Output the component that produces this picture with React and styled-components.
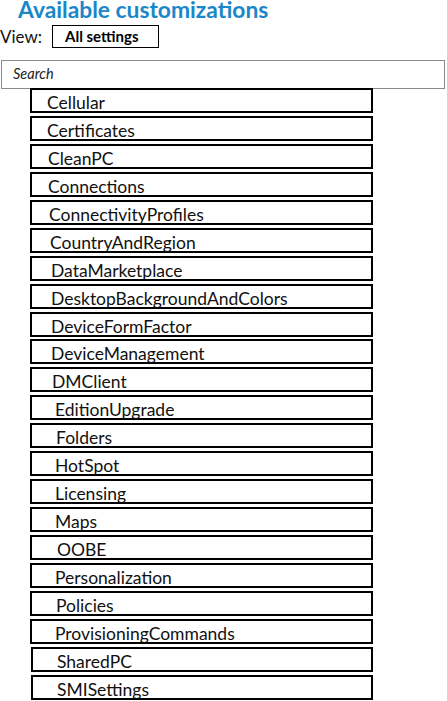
import React from 'react'
import styled, { createGlobalStyle } from 'styled-components'

const items = [
  ['Cellular', 15],
  ['Certificates', 15],
  ['CleanPC', 16],
  ['Connections', 16],
  ['ConnectivityProfiles', 17],
  ['CountryAndRegion', 18],
  ['DataMarketplace', 19],
  ['DesktopBackgroundAndColors', 19],
  ['DeviceFormFactor', 19],
  ['DeviceManagement', 19],
  ['DMClient', 20],
  ['EditionUpgrade', 23],
  ['Folders', 24],
  ['HotSpot', 23],
  ['Licensing', 23],
  ['Maps', 23],
  ['OOBE', 25],
  ['Personalization', 23],
  ['Policies', 24],
  ['ProvisioningCommands', 23],
  ['SharedPC', 24, 1],
  ['SMISettings', 24, 1],
]

function App() {
  return (
    <Page>
      <GlobalStyle />
      <Title>Available customizations</Title>
      <ViewBar>
        <ViewLabel>View:</ViewLabel>
        <ViewSelect>All settings</ViewSelect>
      </ViewBar>
      <Search>Search</Search>
      <List>
        {items.map(([name, indent, shift]) => (
          <Row key={name} $indent={indent} $shift={shift || 0}>{name}</Row>
        ))}
      </List>
    </Page>
  )
}

const GlobalStyle = createGlobalStyle`
  body {
    margin: 0;
    background: #fff;
    font-family: Lato, 'Open Sans', sans-serif;
  }
`

const Page = styled.div`
  width: 447px;
  height: 701px;
  overflow: hidden;
`

const Title = styled.h1`
  margin: -2px 0 0 18px;
  font-size: 22.8px;
  line-height: 22px;
  font-weight: 700;
  color: #1a87c9;
`

const ViewBar = styled.div`
  display: flex;
  align-items: center;
  margin-top: 5px;
  height: 23px;
`

const ViewLabel = styled.span`
  font-size: 17px;
  color: #111;
  width: 52px;
`

const ViewSelect = styled.div`
  box-sizing: border-box;
  width: 107px;
  height: 23px;
  border: 1px solid #000;
  padding-left: 12px;
  font-size: 15px;
  font-weight: 700;
  line-height: 20px;
`

const Search = styled.div`
  box-sizing: border-box;
  margin: 12px 2px 0 1px;
  height: 29px;
  border: 1px solid #8a8a8a;
  padding-left: 11px;
  font-size: 14.5px;
  font-style: italic;
  line-height: 25px;
  color: #222;
`

const List = styled.div`
  display: flex;
  flex-direction: column;
  gap: 2.95px;
  margin: -1px 0 0 30px;
  width: 343px;
`

const Row = styled.div`
  box-sizing: border-box;
  height: 25px;
  border: 2px solid #000;
  margin-left: ${p => p.$shift}px;
  padding: 1px 0 0 ${p => p.$indent}px;
  font-size: 17.5px;
  line-height: 23px;
  color: #111;
  white-space: nowrap;
`

export default App
